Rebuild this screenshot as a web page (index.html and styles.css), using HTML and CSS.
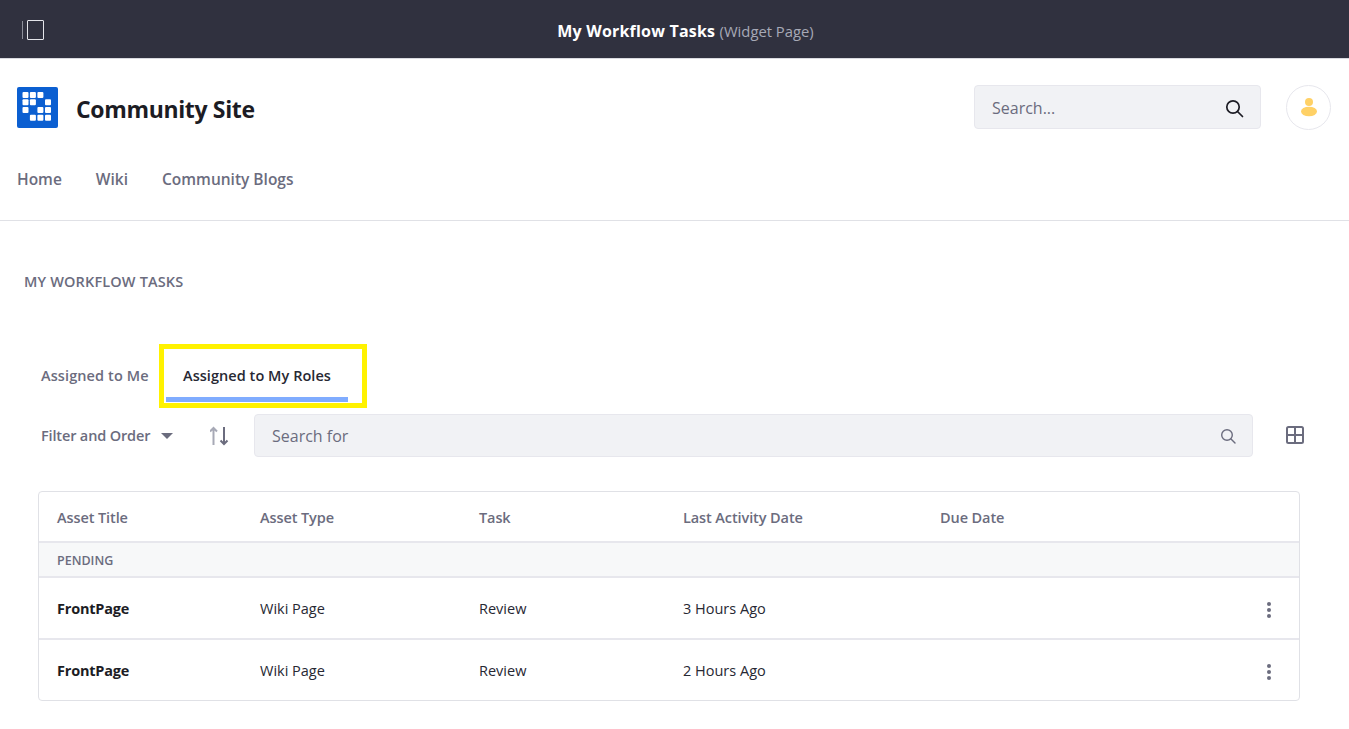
FILE: index.html
```html
<!DOCTYPE html>
<html>
<head>
    <title>My Workflow Tasks</title>
    <link rel="stylesheet" href="styles.css">
</head>
<body>
    <div class="control-bar">
        <svg class="panel-icon" width="24" height="21" viewBox="0 0 24 21" fill="none">
            <path d="M1.5 1v18" stroke="#8d8f9a" stroke-width="1"/>
            <rect x="6.5" y="0.5" width="16" height="19" rx="0.5" stroke="#e4e5ea" stroke-width="1"/>
        </svg>
        <div class="page-title"><strong>My Workflow Tasks</strong> <span>(Widget Page)</span></div>
    </div>

    <header class="site-header">
        <div class="site-top">
            <svg class="logo" width="41" height="41" viewBox="0 0 41 41">
                <rect width="41" height="41" rx="2" fill="#0b5fd1"/>
                <g fill="#fff">
                    <rect x="5.500" y="5" width="6" height="6" rx="1"/><rect x="12.900" y="5" width="6" height="6" rx="1"/><rect x="20.400" y="5" width="6" height="6" rx="1"/>
                    <rect x="5.500" y="12.300" width="6" height="6" rx="1"/><rect x="12.900" y="12.300" width="6" height="6" rx="1"/><rect x="28" y="12.300" width="6" height="6" rx="1"/>
                    <rect x="5.500" y="20" width="6" height="6" rx="1"/><rect x="20.400" y="20" width="6" height="6" rx="1"/><rect x="28" y="20" width="6" height="6" rx="1"/>
                    <rect x="12.900" y="27.700" width="6" height="6" rx="1"/><rect x="20.400" y="27.700" width="6" height="6" rx="1"/><rect x="28" y="27.700" width="6" height="6" rx="1"/>
                </g>
            </svg>
            <div class="site-name">Community Site</div>
            <div class="site-search">
                <span>Search...</span>
                <svg width="20" height="20" viewBox="0 0 20 20" fill="none" stroke="#1c1c24" stroke-width="1.7">
                    <circle cx="9" cy="9" r="6.2"/>
                    <path d="M13.5 13.5l5 5" stroke-linecap="round"/>
                </svg>
            </div>
            <div class="avatar">
                <svg width="18" height="20" viewBox="0 0 18 20" fill="#ffd166">
                    <circle cx="9" cy="5" r="4"/>
                    <ellipse cx="9" cy="14.5" rx="8" ry="4.8"/>
                </svg>
            </div>
        </div>
        <nav class="site-nav">
            <a>Home</a>
            <a>Wiki</a>
            <a>Community Blogs</a>
        </nav>
    </header>

    <main class="portlet">
        <h2 class="portlet-title">MY WORKFLOW TASKS</h2>

        <div class="tabs">
            <a class="tab">Assigned to Me</a>
            <div class="tab-highlight">
                <a class="tab-active">Assigned to My Roles</a>
            </div>
        </div>

        <div class="toolbar">
            <div class="filter">Filter and Order <i class="caret"></i></div>
            <svg class="sort-icon" width="20" height="20" viewBox="0 0 20 20" fill="none" stroke-width="2">
                <path d="M3.500 19V2M0 5.500l3.500-3.500 3.500 3.500" stroke="#a7a9b6"/>
                <path d="M14 1v17M10.500 14.500l3.500 3.500 3.500-3.500" stroke="#6b6c7e"/>
            </svg>
            <div class="toolbar-search">
                <span>Search for</span>
                <svg width="16" height="16" viewBox="0 0 16 16" fill="none" stroke="#6b6c7e" stroke-width="1.4">
                    <circle cx="7" cy="7" r="5.300"/>
                    <path d="M11 11l4 4" stroke-linecap="round"/>
                </svg>
            </div>
            <svg class="grid-icon" width="18" height="18" viewBox="0 0 18 18" fill="none" stroke="#6b6c7e" stroke-width="2">
                <rect x="1" y="1" width="16" height="16" rx="1.500"/>
                <path d="M9 1v16M1 9h16"/>
            </svg>
        </div>

        <div class="table-box">
            <table>
                <thead>
                    <tr>
                        <th class="col-title">Asset Title</th>
                        <th class="col-type">Asset Type</th>
                        <th class="col-task">Task</th>
                        <th class="col-date">Last Activity Date</th>
                        <th class="col-due">Due Date</th>
                        <th></th>
                    </tr>
                </thead>
                <tbody>
                    <tr class="group-row"><td colspan="6">PENDING</td></tr>
                    <tr class="first-row">
                        <td><b>FrontPage</b></td>
                        <td>Wiki Page</td>
                        <td>Review</td>
                        <td>3 Hours Ago</td>
                        <td></td>
                        <td class="actions"><i class="kebab"></i></td>
                    </tr>
                    <tr>
                        <td><b>FrontPage</b></td>
                        <td>Wiki Page</td>
                        <td>Review</td>
                        <td>2 Hours Ago</td>
                        <td></td>
                        <td class="actions"><i class="kebab"></i></td>
                    </tr>
                </tbody>
            </table>
        </div>
    </main>
</body>
</html>
```

FILE: styles.css
```css
body {
    font-family: "Open Sans", "Noto Sans", Arial, sans-serif;
    margin: 0;
    color: #272833;
    background: #fff;
    font-size: 14.500px;
}
.control-bar {
    height: 58px;
    background: #30313f;
    border-bottom: 1px solid #d9dae0;
    display: flex;
    align-items: center;
    justify-content: center;
    position: relative;
    box-sizing: content-box;
}
.panel-icon {
    position: absolute;
    left: 21px;
    top: 20px;
}
.page-title {
    color: #fff;
    font-size: 16px;
    margin-top: 4px;
    padding-left: 22px;
    letter-spacing: 0.2px;
}
.page-title strong {
    font-weight: 700;
}
.page-title span {
    color: #a7a9b6;
    font-size: 14.800px;
    letter-spacing: 0;
}
.site-header {
    border-bottom: 1px solid #e0e1e6;
    height: 162px;
    box-sizing: border-box;
    padding: 0 18px 0 17px;
}
.site-top {
    display: flex;
    align-items: center;
    padding-top: 25px;
    height: 46px;
}
.logo {
    margin-right: 18px;
}
.site-name {
    font-size: 23px;
    font-weight: 700;
    color: #1c1c24;
    letter-spacing: -0.35px;
    margin-top: 4px;
    flex: 1;
}
.site-search {
    width: 287px;
    height: 44px;
    box-sizing: border-box;
    background: #f1f2f5;
    border: 1px solid #e7e7ed;
    border-radius: 4px;
    display: flex;
    align-items: center;
    justify-content: space-between;
    padding: 1px 16px 0 17px;
    color: #6b6c7e;
    font-size: 16px;
}
.avatar {
    width: 45px;
    height: 45px;
    box-sizing: border-box;
    border: 1px solid #e7e7ed;
    border-radius: 50%;
    margin-left: 25px;
    display: flex;
    align-items: center;
    justify-content: center;
}
.site-nav {
    display: flex;
    gap: 34px;
    margin-top: 38px;
    font-size: 15.500px;
    font-weight: 600;
    color: #6b6c7e;
}
.portlet {
    padding: 0 49px 0 38px;
}
.portlet-title {
    margin: 51px 0 0 -14px;
    font-size: 14.500px;
    line-height: 20px;
    font-weight: 600;
    color: #6b6c7e;
    letter-spacing: 0.15px;
}
.tabs {
    display: flex;
    align-items: flex-start;
    margin-top: 52px;
    height: 64px;
}
.tab {
    padding: 22px 0 0 3px;
    width: 118px;
    line-height: 20px;
    font-weight: 600;
    color: #6b6c7e;
    letter-spacing: 0.1px;
}
.tab-highlight {
    width: 208px;
    height: 64px;
    box-sizing: border-box;
    border: 5px solid #fff200;
    padding-left: 2px;
}
.tab-active {
    display: block;
    width: 182px;
    height: 53px;
    padding: 17px 0 0 17px;
    box-sizing: border-box;
    line-height: 20px;
    font-weight: 600;
    color: #272833;
    letter-spacing: 0.05px;
    border-bottom: 5px solid #80acff;
}
.toolbar {
    display: flex;
    align-items: center;
    height: 43px;
    margin-top: 6px;
}
.toolbar > * {
    flex: none;
}
.filter {
    width: 172px;
    padding-left: 3px;
    box-sizing: border-box;
    font-weight: 600;
    color: #6b6c7e;
    letter-spacing: -0.15px;
    display: flex;
    align-items: center;
}
.caret {
    width: 0;
    height: 0;
    border-left: 6px solid transparent;
    border-right: 6px solid transparent;
    border-top: 6px solid #6b6c7e;
    margin-left: 11px;
}
.sort-icon {
    margin-right: 24px;
}
.toolbar-search {
    width: 999px;
    height: 43px;
    box-sizing: border-box;
    background: #f1f2f5;
    border: 1px solid #e7e7ed;
    border-radius: 4px;
    display: flex;
    align-items: center;
    justify-content: space-between;
    padding: 0 16px 0 17px;
    color: #6b6c7e;
    font-size: 16px;
}
.grid-icon {
    margin: -2px 0 0 33px;
}
.table-box {
    margin-top: 34px;
    width: 1262px;
    border: 1px solid #e0e1e6;
    border-radius: 4px;
    box-sizing: border-box;
}
table {
    width: 100%;
    border-collapse: collapse;
    table-layout: fixed;
}
th {
    height: 50px;
    padding: 2px 0 0 18px;
    text-align: left;
    font-weight: 600;
    color: #6b6c7e;
    letter-spacing: -0.1px;
    box-sizing: border-box;
}
td {
    height: 61px;
    padding: 0 0 0 18px;
    border-top: 2px solid #e7e7ed;
    box-sizing: border-box;
}
td b {
    font-weight: 700;
    color: #1c1c24;
    letter-spacing: -0.2px;
}
.col-title { width: 203px; }
.col-type { width: 219px; }
.col-task { width: 204px; }
.col-date { width: 257px; }
.col-due { width: 300px; }
.group-row td {
    height: 35px;
    padding-top: 1px;
    background: #f7f8f9;
    font-size: 12.500px;
    font-weight: 600;
    color: #6b6c7e;
}
.first-row td {
    height: 62px;
}
.actions {
    text-align: right;
    padding-right: 28px;
}
.kebab {
    display: inline-block;
    width: 4px;
    height: 4px;
    border-radius: 50%;
    background: #6b6c7e;
    box-shadow: 0 -6px 0 #6b6c7e, 0 6px 0 #6b6c7e;
    vertical-align: middle;
}
```
